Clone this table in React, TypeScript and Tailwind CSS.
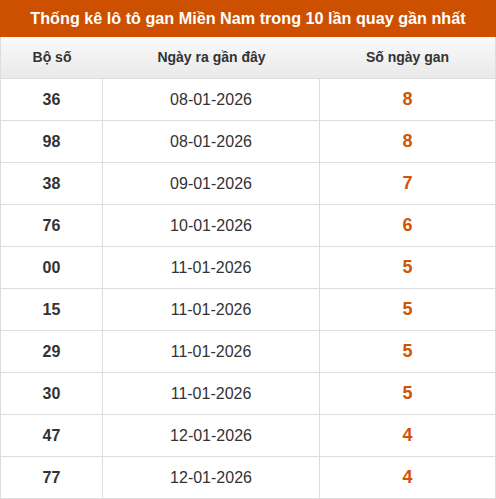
const rows: [string, string, number][] = [
  ['36', '08-01-2026', 8],
  ['98', '08-01-2026', 8],
  ['38', '09-01-2026', 7],
  ['76', '10-01-2026', 6],
  ['00', '11-01-2026', 5],
  ['15', '11-01-2026', 5],
  ['29', '11-01-2026', 5],
  ['30', '11-01-2026', 5],
  ['47', '12-01-2026', 4],
  ['77', '12-01-2026', 4],
];

export default function App() {
  return (
    <div className="w-[496px] bg-white font-['Liberation_Sans',Arial,sans-serif] text-[#333]">
      <div className="flex h-[37px] items-center justify-center bg-[#cc5000] text-[16.2px] font-bold text-white">
        Thống kê lô tô gan Miền Nam trong 10 lần quay gần nhất
      </div>
      <div className="border-x border-[#ddd]">
        <div className="grid h-[42px] grid-cols-[102px_217px_1fr] border-b border-[#ddd] bg-gradient-to-b from-[#fafafa] to-[#e9e9e9] text-[14px] font-bold">
          <div className="flex items-center justify-center">Bộ số</div>
          <div className="flex items-center justify-center">Ngày ra gần đây</div>
          <div className="flex items-center justify-center">Số ngày gan</div>
        </div>
        {rows.map(([num, date, gan]) => (
          <div
            key={num}
            className="grid h-[42px] grid-cols-[102px_217px_1fr] border-b border-[#ddd]"
          >
            <div className="flex items-center justify-center border-r border-[#ddd] text-[16px] font-bold">
              {num}
            </div>
            <div className="flex items-center justify-center border-r border-[#ddd] text-[16px]">
              {date}
            </div>
            <div className="flex items-center justify-center text-[18px] font-bold text-[#d35400]">
              {gan}
            </div>
          </div>
        ))}
      </div>
    </div>
  );
}
